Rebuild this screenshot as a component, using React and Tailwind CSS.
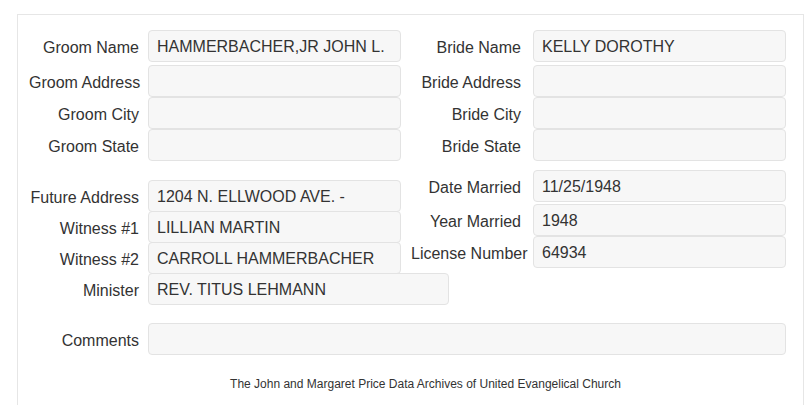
const font = { fontFamily: '"Liberation Sans", Arial, sans-serif' };

function Field({ label, value, labelW = 'w-[110px]', gap = 'ml-[9px]', inputW = 'w-[253px]', className = '' }) {
  return (
    <div className={`flex items-start ${className}`}>
      <div className={`${labelW} shrink-0 whitespace-nowrap pt-[8px] text-right text-[16px] leading-[20px] text-[#333]`}>
        {label}
      </div>
      <div
        className={`${gap} ${inputW} shrink-0 h-[32px] flex items-center rounded-[4px] border border-[#e3e3e3] bg-[#f7f7f7] px-[8px] pt-[1px] text-[16px] text-[#333] whitespace-nowrap overflow-hidden`}
      >
        {value}
      </div>
    </div>
  );
}

export default function App() {
  return (
    <div className="w-[805px] h-[405px] overflow-hidden bg-white" style={font}>
      <div className="ml-[17px] mt-[14px] w-[787px] h-[420px] border border-[#e6e6e6] pt-[15px]">
        {/* Groom / Bride block */}
        <div className="flex">
          <div className="w-[393px] shrink-0 pl-[11px]">
            <Field label="Groom Name" value="HAMMERBACHER,JR JOHN L." className="mb-[3px]" />
            <Field label="Groom Address" value="" />
            <Field label="Groom City" value="" />
            <Field label="Groom State" value="" />
          </div>
          <div className="shrink-0">
            <Field label="Bride Name" value="KELLY DOROTHY" gap="ml-[12px]" className="mb-[3px]" />
            <Field label="Bride Address" value="" gap="ml-[12px]" />
            <Field label="Bride City" value="" gap="ml-[12px]" />
            <Field label="Bride State" value="" gap="ml-[12px]" />
          </div>
        </div>

        {/* Marriage details */}
        <div className="flex items-start mt-[9px]">
          <div className="w-[393px] shrink-0 pl-[11px] pt-[10px]">
            <Field label="Future Address" value="1204 N. ELLWOOD AVE. -" className="-mb-[1px]" />
            <Field label="Witness #1" value="LILLIAN MARTIN" className="-mb-[1px]" />
            <Field label="Witness #2" value="CARROLL HAMMERBACHER" className="-mb-[1px]" />
            <Field label="Minister" value="REV. TITUS LEHMANN" inputW="w-[301px]" />
          </div>
          <div className="shrink-0">
            <Field label="Date Married" value="11/25/1948" gap="ml-[12px]" className="mb-[2px]" />
            <Field label="Year Married" value="1948" gap="ml-[12px]" />
            <Field label="License Number" value="64934" gap="ml-[12px]" />
          </div>
        </div>

        {/* Comments */}
        <div className="pl-[11px] mt-[18px]">
          <Field label="Comments" value="" inputW="w-[638px]" />
        </div>

        <div className="mt-[21px] pl-[30px] text-center text-[12px] leading-[16px] text-[#333]">
          The John and Margaret Price Data Archives of United Evangelical Church
        </div>
      </div>
    </div>
  );
}
